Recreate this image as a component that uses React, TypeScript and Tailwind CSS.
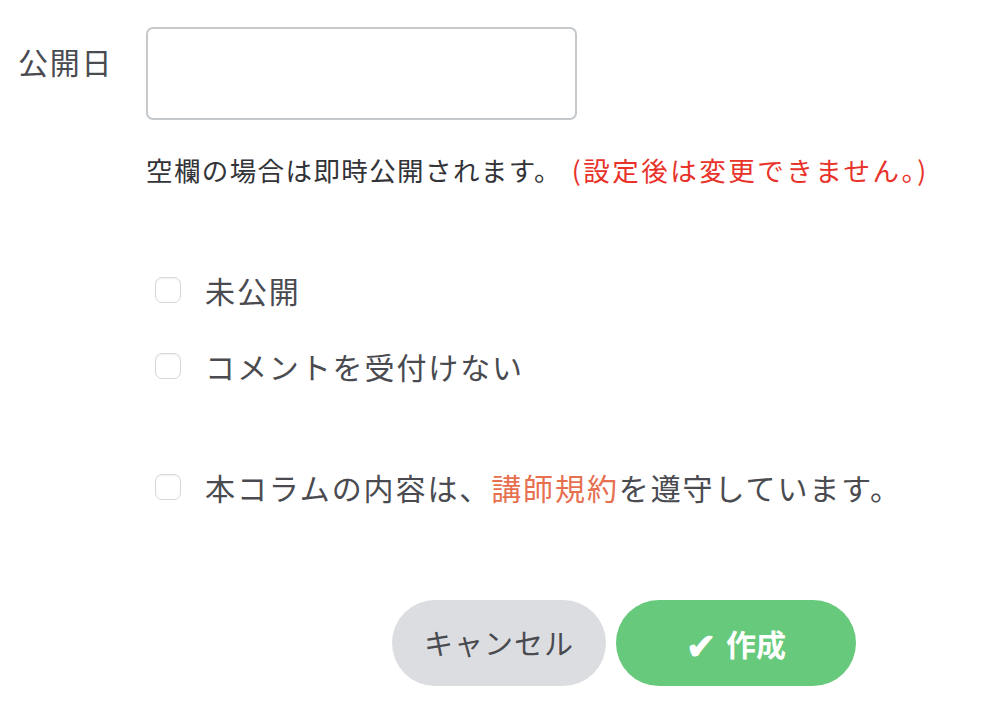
import React from 'react';

const font = { fontFamily: '"Noto Sans CJK JP", "Noto Sans", sans-serif' };

function Check({ children, className = '' }: { children: React.ReactNode; className?: string }) {
  return (
    <label className={`flex items-center h-[40px] ${className}`}>
      <span className="w-[26px] h-[26px] rounded-[7px] border border-[#d6d7da] bg-white shadow-[inset_0_1px_2px_rgba(0,0,0,0.06)] shrink-0" />
      <span className="ml-[24px] text-[30px] leading-[40px] text-[#4a4b50] tracking-[1.9px]">{children}</span>
    </label>
  );
}

export default function App() {
  return (
    <div className="w-[1008px] h-[722px] bg-white pt-[27px] pl-[18px]" style={font}>
      {/* 公開日 */}
      <div className="flex">
        <div className="w-[128px] pt-[14px] text-[30px] leading-[40px] text-[#4a4b50] tracking-[1.8px]">公開日</div>
        <div className="w-[431px] h-[93px] border-2 border-[#c6c9cc] rounded-[7px] bg-white" />
      </div>

      <p className="ml-[128px] mt-[34px] text-[26.5px] leading-[32px] text-[#333438] tracking-[1.4px]">
        空欄の場合は即時公開されます。
        <span className="ml-[10px] text-[#e8322a] tracking-[2.5px]">(設定後は変更できません。)</span>
      </p>

      <div className="ml-[137px] mt-[84px] flex flex-col">
        <Check>未公開</Check>
        <Check className="mt-[36px]">コメントを受付けない</Check>
        <Check className="mt-[81px]">
          本コラムの内容は、<span className="text-[#e6704f]">講師規約</span>を遵守しています。
        </Check>
      </div>

      <div className="ml-[374px] mt-[93px] flex gap-[10px]">
        <button className="w-[214px] h-[86px] rounded-full bg-[#dcdde0] text-[29px] text-[#4a4b50] tracking-[1px]">
          キャンセル
        </button>
        <button className="w-[240px] h-[86px] rounded-full bg-[#66c97b] text-[30px] font-bold text-white flex items-center justify-center">
          <span className="mr-[10px] text-[36px] leading-none">✔</span>作成
        </button>
      </div>
    </div>
  );
}
